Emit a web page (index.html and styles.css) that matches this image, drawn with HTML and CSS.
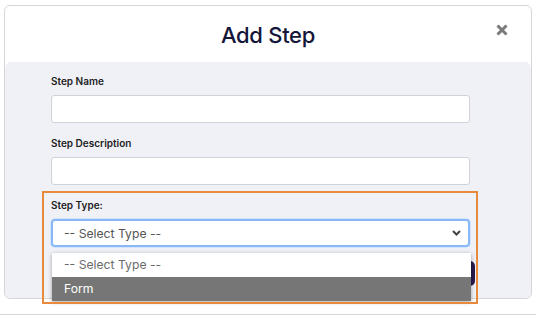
FILE: index.html
```html
<!DOCTYPE html>
<html>
<head>
	<title>Add Step</title>
	<meta charset="utf-8" />
	<link rel="stylesheet" href="styles.css">
</head>
<body>
	<div class="modal">
		<div class="modal_header">
			<span></span>
			<div class="modal_title">Add Step</div>
			<div class="close_btn">
				<svg width="12" height="12" viewBox="0 0 12 12"><path d="M1.5 1.5 L10.5 10.5 M10.5 1.5 L1.5 10.5" stroke="#7a7a7a" stroke-width="3" /></svg>
			</div>
		</div>
		<div class="modal_body">
			<div class="form_group">
				<label class="field_label">Step Name</label>
				<input type="text" class="field_input" />
			</div>
			<div class="form_group">
				<label class="field_label">Step Description</label>
				<input type="text" class="field_input" />
			</div>
			<div class="form_group type_group">
				<label class="field_label">Step Type:</label>
				<div class="select_box">
					<span>-- Select Type --</span>
					<svg width="9" height="6" viewBox="0 0 9 6"><path d="M1 1 L4.5 4.5 L8 1" fill="none" stroke="#444" stroke-width="2" /></svg>
				</div>
				<div class="dropdown">
					<div class="option">-- Select Type --</div>
					<div class="option selected">Form</div>
				</div>
				<div class="highlight"></div>
			</div>
			<div class="button_row">
				<button class="save_btn">Save</button>
			</div>
		</div>
	</div>
	<div class="page_rule"></div>
</body>
</html>
```

FILE: styles.css
```css
body { margin: 0; background: #fff; font-family: Inter, "Liberation Sans", sans-serif; }
.modal { margin: 5px 0 0 4px; width: 526px; height: 292px; border: 1px solid #d6d6d6; border-radius: 6px; background: #fff; display: flex; flex-direction: column; }
.modal_header { height: 56px; display: grid; grid-template-columns: 1fr auto 1fr; align-items: start; }
.modal_title { margin-top: 16px; font-size: 22px; font-weight: 500; color: #14163a; letter-spacing: -0.3px; }
.close_btn { justify-self: end; margin: 14px 23px 0 0; }
.modal_body { flex: 1; background: #f0f1f7; border-radius: 6px; padding: 13px 0 0 46px; }
.form_group { width: 419px; margin-bottom: 14px; }
.field_label { display: block; font-size: 10px; line-height: 12px; font-weight: 600; color: #222; margin-bottom: 8px; }
.field_input { display: block; box-sizing: border-box; width: 419px; height: 28px; border: 1px solid #cfd2d8; border-radius: 3px; background: #fff; }
.type_group { position: relative; margin-top: 14px; }
.select_box { box-sizing: border-box; height: 28px; border: 2px solid #8ab8f6; border-radius: 4px; background: #fff; box-shadow: 0 0 0 1px #d4e5fb; display: flex; align-items: center; justify-content: space-between; padding: 0 7px 0 11px; font-size: 12.2px; color: #555; }
.dropdown { position: absolute; left: 1px; top: 54px; width: 419px; background: #fff; box-shadow: 0 1px 4px rgba(0,0,0,0.35); z-index: 2; }
.option { height: 24px; line-height: 24px; padding-left: 12px; font-size: 12.2px; color: #6b6b6b; }
.option.selected { background: #767676; color: #fff; }
.highlight { position: absolute; left: -9px; top: -8px; width: 432px; height: 109px; border: 2px solid #e8893c; z-index: 3; }
.button_row { width: 424px; display: flex; justify-content: flex-end; margin-top: 9px; }
.save_btn { height: 25px; padding: 0 18px; border: 0; border-radius: 5px; background: #2b1a4e; color: #fff; font-size: 11px; }
.page_rule { margin-top: 15px; border-top: 1px solid #d6d6d6; }
```
